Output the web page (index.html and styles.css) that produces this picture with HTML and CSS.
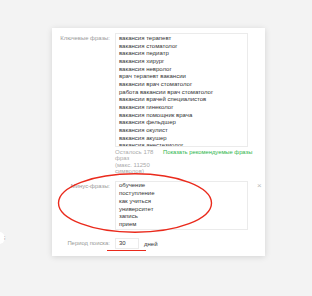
FILE: index.html
```html
<!DOCTYPE html>
<html lang="ru">
<head>
    <meta charset="UTF-8">
    <meta name="viewport" content="width=device-width, initial-scale=1.0">
    <title>Фразы</title>
    <link rel="stylesheet" href="styles.css">
</head>
<body>
    <div class="side-dot"><span>⁝</span></div>
    <div class="card">
        <div class="row">
            <div class="label">Ключевые фразы:</div>
            <div class="field phrases">
                <div>вакансия терапевт</div>
                <div>вакансия стоматолог</div>
                <div>вакансия педиатр</div>
                <div>вакансия хирург</div>
                <div>вакансия невролог</div>
                <div>врач терапевт вакансии</div>
                <div>вакансии врач стоматолог</div>
                <div>работа вакансии врач стоматолог</div>
                <div>вакансии врачей специалистов</div>
                <div>вакансия гинеколог</div>
                <div>вакансия помощник врача</div>
                <div>вакансия фельдшер</div>
                <div>вакансия окулист</div>
                <div>вакансия акушер</div>
                <div>вакансия анестезиолог</div>
            </div>
            <div></div>
        </div>
        <div class="row hint-row">
            <div></div>
            <div class="hints">
                <div class="left-count">
                    <div>Осталось 178 фраз</div>
                    <div>(макс. 11250 символов)</div>
                </div>
                <a class="suggest">Показать рекомендуемые фразы</a>
            </div>
            <div></div>
        </div>
        <div class="row minus-row">
            <div class="label">Минус-фразы:</div>
            <div class="field minus">
                <div>обучение</div>
                <div>поступление</div>
                <div>как учиться</div>
                <div>университет</div>
                <div>запись</div>
                <div>прием</div>
            </div>
            <div class="close">×</div>
        </div>
        <div class="row period-row">
            <div class="label">Период поиска:</div>
            <div class="period">
                <div class="days-input">30</div>
                <span class="days">дней</span>
            </div>
            <div></div>
        </div>
        <svg class="mark-ellipse" width="160" height="64" viewBox="0 0 160 64">
            <ellipse cx="80" cy="32" rx="76.5" ry="29.3" fill="none" stroke="#ea2a1c" stroke-width="1.4"/>
        </svg>
        <div class="mark-line"></div>
    </div>
</body>
</html>
```

FILE: styles.css
```css
body {
    margin: 0;
    background: #f3f3f3;
    font-family: "Liberation Sans", Arial, sans-serif;
    height: 296px;
    overflow: hidden;
    position: relative;
}

.card {
    position: relative;
    margin: 28px 0 0 52px;
    width: 213px;
    height: 228px;
    box-sizing: border-box;
    padding-top: 5px;
    background: #fff;
    box-shadow: 0 1px 6px rgba(0,0,0,0.13);
}

.row {
    display: grid;
    grid-template-columns: 58px 133px 1fr;
    column-gap: 5px;
}

.label {
    text-align: right;
    font-size: 5.9px;
    line-height: 7.7px;
    color: #999;
    padding-top: 2px;
}

.field {
    border: 1px solid #ebebeb;
    box-sizing: border-box;
    padding: 1px 3px;
    overflow: hidden;
    font-size: 6px;
    line-height: 7.67px;
    color: #333;
}

.phrases {
    height: 114px;
}

.hint-row {
    margin-top: 2px;
}

.hints {
    display: flex;
    gap: 4px;
    font-size: 6px;
    line-height: 6.3px;
}

.left-count {
    flex: none;
    width: 44px;
    color: #aaa;
}

.suggest {
    color: #2cb54a;
    white-space: nowrap;
    font-size: 5.8px;
}

.minus-row {
    margin-top: 7px;
}

.minus {
    height: 49px;
    padding-top: 0;
    line-height: 7.8px;
}

.close {
    color: #bbb;
    font-size: 8px;
    line-height: 8px;
    padding: 1px 0 0 4px;
}

.period-row {
    margin-top: 8px;
    align-items: center;
}

.period-row .label {
    padding-top: 0;
}

.period {
    display: flex;
    align-items: center;
    gap: 5px;
}

.days-input {
    width: 24px;
    height: 11px;
    box-sizing: border-box;
    border: 1px solid #ebebeb;
    padding-left: 3px;
    font-size: 6px;
    line-height: 9px;
    color: #333;
}

.days {
    font-size: 6px;
    color: #333;
}

.mark-ellipse {
    position: absolute;
    left: 3px;
    top: 143px;
}

.mark-line {
    position: absolute;
    left: 55px;
    top: 221.5px;
    width: 39px;
    height: 1.4px;
    background: #ea2a1c;
}

.side-dot {
    position: absolute;
    left: -7px;
    top: 232px;
    width: 12px;
    height: 12px;
    border-radius: 50%;
    background: #fff;
    font-size: 5px;
    line-height: 12px;
    color: #666;
    text-align: right;
}
```
